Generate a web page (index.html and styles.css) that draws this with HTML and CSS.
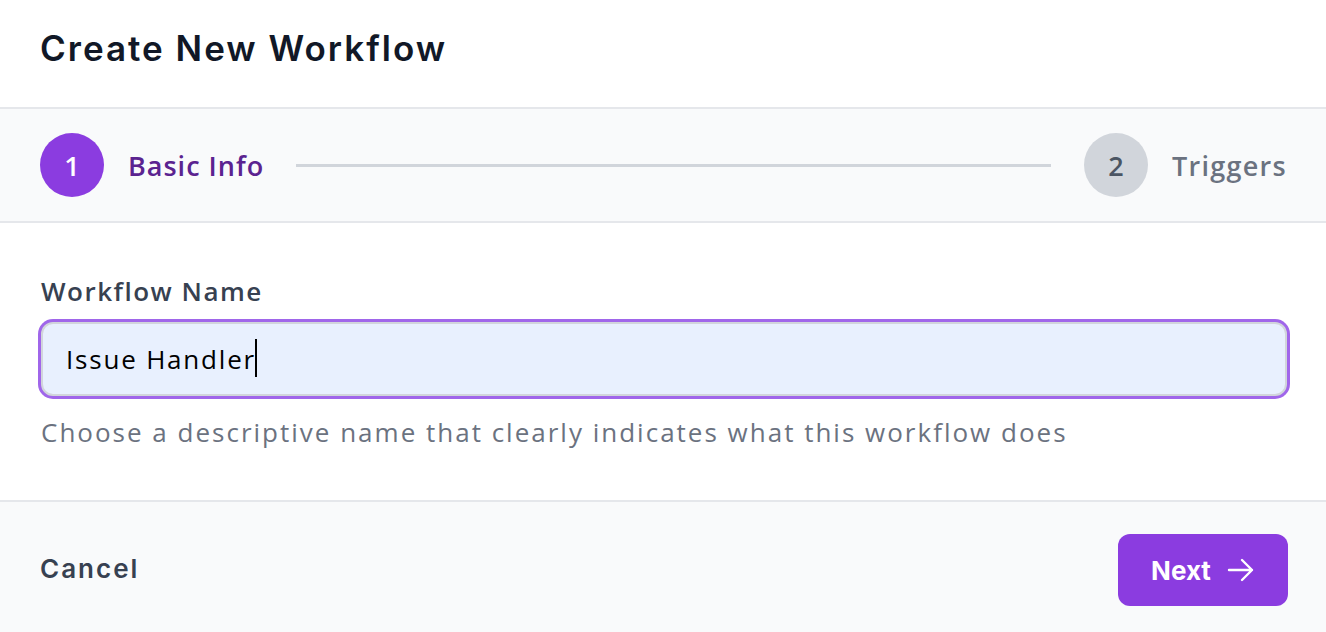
FILE: index.html
```html
<!DOCTYPE html>
<html>
<head>
<meta charset="utf-8">
<link rel="stylesheet" href="styles.css">
</head>
<body>
<div class="modal">
  <div class="header">
    <h1 class="title">Create New Workflow</h1>
  </div>
  <div class="stepper">
    <div class="step-circle active">1</div>
    <div class="step-label active">Basic Info</div>
    <div class="step-line"></div>
    <div class="step-circle">2</div>
    <div class="step-label">Triggers</div>
  </div>
  <div class="content">
    <div class="field-label">Workflow Name</div>
    <div class="input"><span class="input-text">Issue Handler</span><span class="caret"></span></div>
    <div class="help">Choose a descriptive name that clearly indicates what this workflow does</div>
  </div>
  <div class="footer">
    <div class="cancel">Cancel</div>
    <div class="next">Next
      <svg class="arrow" width="28" height="24" viewBox="0 0 28 24" fill="none" stroke="#fff" stroke-width="2.4" stroke-linecap="round" stroke-linejoin="round"><path d="M2 12h23M15 2l10 10-10 10"/></svg>
    </div>
  </div>
</div>
</body>
</html>
```
FILE: styles.css
```css
* { box-sizing: border-box; }
html, body { margin: 0; padding: 0; background: #fff; }
body { font-family: "Open Sans", "Noto Sans", sans-serif; color: #111827; }
.modal { width: 1326px; height: 632px; display: flex; flex-direction: column; overflow: hidden; }
.header { height: 109px; padding: 0 40px; display: flex; align-items: center; border-bottom: 2px solid #e5e7eb; flex: none; }
.title { margin: 0; font-family: Inter, sans-serif; font-weight: 600; font-size: 35px; color: #111827; letter-spacing: 2px; position: relative; top: -6px; }
.stepper { height: 114px; flex: none; background: #f9fafb; border-bottom: 2px solid #e5e7eb; display: flex; align-items: center; padding: 0 39px 0 40px; }
.step-circle { width: 64px; height: 64px; border-radius: 50%; background: #d1d5db; color: #4b5563; display: flex; align-items: center; justify-content: center; font-size: 27px; font-weight: 600; flex: none; }
.step-circle.active { background: #8b3ce0; color: #fff; }
.step-label { margin-left: 24px; font-size: 27px; font-weight: 600; color: #6b7280; letter-spacing: 1.3px; }
.step-label.active { color: #5b2390; letter-spacing: 1px; }
.step-line { flex: 1; height: 3px; background: #d1d5db; margin: 0 33px 0 32px; }
.content { flex: 1; padding: 50px 39px 0 41px; }
.field-label { font-size: 26px; font-weight: 600; color: #374151; line-height: 36px; letter-spacing: 1.5px; }
.input { margin-top: 13px; height: 74px; border: 2px solid #d1d5db; border-radius: 12px; background: #e8f0fe; box-shadow: 0 0 0 3px #a066ea; display: flex; align-items: center; padding-left: 23px; font-size: 26px; color: #000; letter-spacing: 1.8px; }
.caret { display: inline-block; width: 2px; height: 38px; background: #000; margin-left: -1px; margin-top: -2px; }
.help { margin-top: 18px; font-size: 26px; color: #6b7280; line-height: 36px; letter-spacing: 2px; }
.footer { height: 132px; flex: none; background: #f9fafb; border-top: 2px solid #e5e7eb; display: flex; align-items: center; justify-content: space-between; padding: 6px 38px 0 40px; }
.cancel { font-family: Inter, sans-serif; font-size: 26px; font-weight: 600; color: #374151; letter-spacing: 2px; margin-bottom: 4px; }
.next { width: 170px; height: 72px; border-radius: 12px; background: #8b3ce0; color: #fff; font-family: Inter, sans-serif; font-size: 26px; font-weight: 700; display: flex; align-items: center; justify-content: center; gap: 16px; }
.arrow { display: block; }
```
